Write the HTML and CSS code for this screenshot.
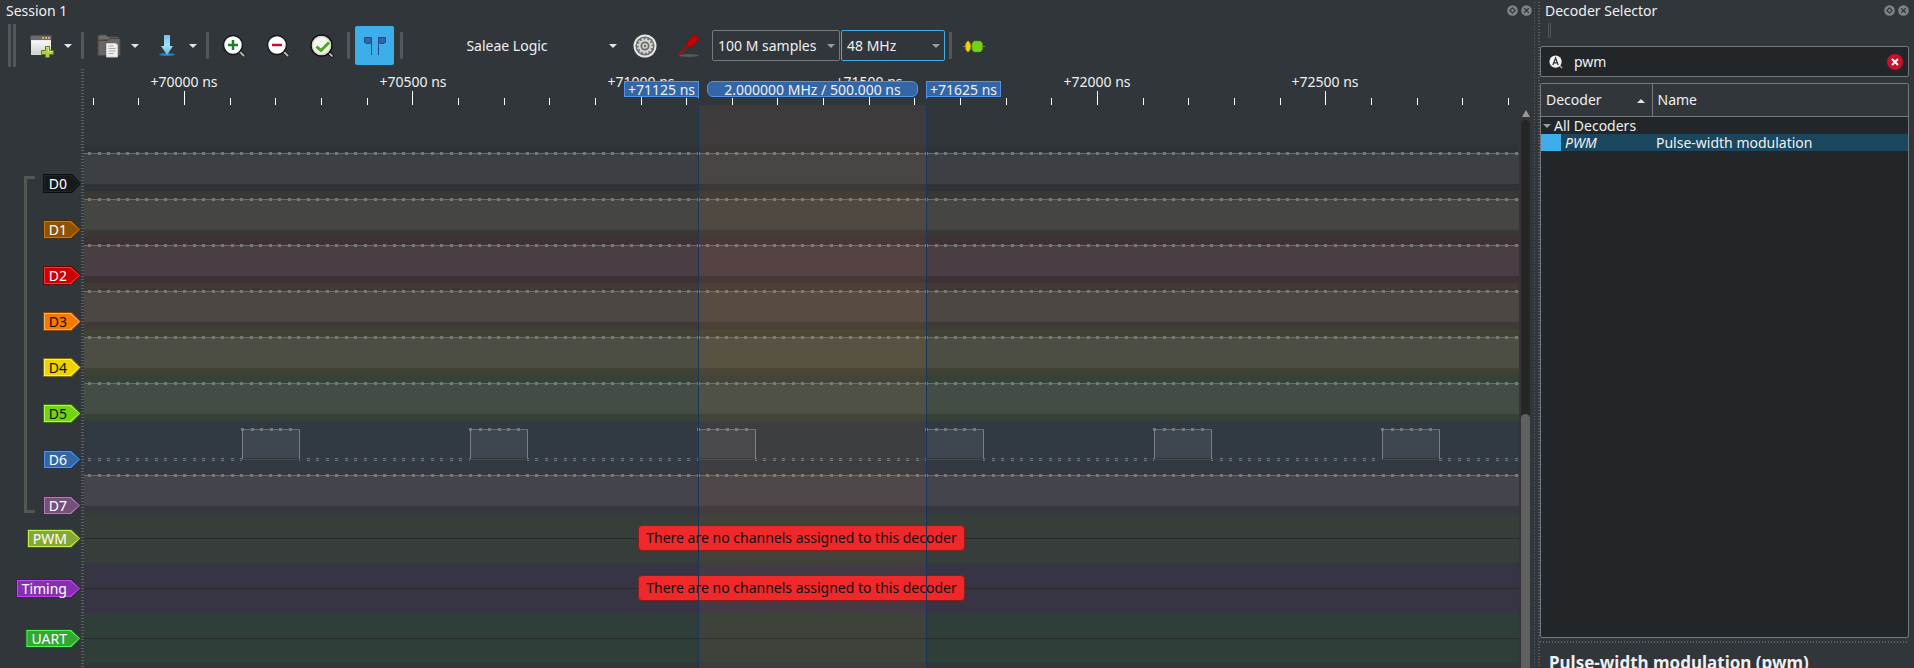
FILE: index.html
```html
<!DOCTYPE html>
<html lang="en">
<head>
<meta charset="utf-8">
<title>Session 1</title>
<link rel="stylesheet" href="styles.css">
</head>
<body>
<svg class="defs" aria-hidden="true">
  <symbol id="float" viewBox="0 0 11 11"><circle cx="5.500" cy="5.500" r="5.300" fill="#818486"/><path d="M5.500 2.800 8.200 5.500 5.500 8.200 2.800 5.500z" fill="none" stroke="#31363b" stroke-width="1.200"/></symbol>
  <symbol id="close" viewBox="0 0 11 11"><circle cx="5.500" cy="5.500" r="5.300" fill="#818486"/><path d="M3.200 3.200 7.800 7.800M7.800 3.200 3.200 7.800" stroke="#31363b" stroke-width="1.300"/></symbol>
  <symbol id="high" overflow="visible">
    <rect y="8" width="100%" height="30" fill="#fff" fill-opacity=".065"/>
    <path d="M0 38.500H6000" stroke="#fff" stroke-opacity=".06"/>
    <path d="M0 8.500H6000" stroke="#10ad10"/>
    <path d="M4.200 8.500H6000" stroke="#767a76" stroke-width="3" stroke-dasharray="3 6.510"/>
    <path d="M0 8.500H6000" stroke="#10ad10" stroke-opacity=".25"/>
  </symbol>
  <symbol id="pulse" overflow="visible">
    <rect y="8" width="57" height="30" fill="#fff" fill-opacity=".065"/>
    <path d="M0 38.500H57" stroke="#32373c" stroke-width="3"/>
    <path d="M0 38.500H57" stroke="#444c52"/>
    <path d="M.500 8V38M57.500 8V38" stroke="#7b7f82"/>
    <path d="M0 8.500H58" stroke="#10ad10"/>
    <path d="M-1 8.500H50" stroke="#767a76" stroke-width="3" stroke-dasharray="3 6.510"/>
  </symbol>
</svg>

<main class="window">
  <section class="session">
    <header class="dock-title">
      <h1>Session 1</h1>
      <button aria-label="Float"><svg><use href="#float"/></svg></button>
      <button aria-label="Close"><svg><use href="#close"/></svg></button>
    </header>

    <div class="toolbar">
      <span class="handle"></span>
      <div class="split">
        <button class="tool" aria-label="New view"><svg class="icon" viewBox="0 0 24 24">
          <path d="M1 2h20v19H1z" fill="#d9d9d9"/><path d="M.500 1.500h21V6H.500z" fill="#6b6b6b"/><path d="M1 6.500h20V20H1z" fill="url(#win)"/>
          <path d="M12 3h2v2h-2zM15 3h2v2h-2zM18 3h2v2h-2z" fill="#e9a53a"/>
          <path d="M15.500 12.500h4v4h4v4h-4v3h-4v-3h-4v-4h4z" fill="#b4cf4b" stroke="#5f7a14"/>
          <path d="M16.500 13.500h2v4h4" fill="none" stroke="#dbe88f"/>
          <defs><linearGradient id="win" x2="0" y2="1"><stop stop-color="#fafafa"/><stop offset="1" stop-color="#cfcfcf"/></linearGradient></defs>
        </svg></button>
        <button class="arrow" aria-label="New view options"></button>
      </div>
      <span class="sep"></span>
      <div class="split">
        <button class="tool" aria-label="Open"><svg class="icon" viewBox="0 0 24 24">
          <path d="M1 2.500 2 1h7l2 2h10.500v3H1z" fill="#6f6c6a" stroke="#4b4846"/><path d="M1 6.500 11 6.500 13 4.500h10V21.500H1z" fill="#686563" stroke="#4a4745"/>
          <path d="M9.500 9.500H19l1.500 1.500v12H9.500z" fill="#efefef" stroke="#c9c9c9"/><path d="M11.500 12h5M11.500 14.500h7M11.500 17h7M11.500 19.500h5" stroke="#a9a9a9"/>
        </svg></button>
        <button class="arrow" aria-label="Open options"></button>
      </div>
      <div class="split">
        <button class="tool" aria-label="Save"><svg class="icon" viewBox="0 0 24 24">
          <ellipse cx="12" cy="20.500" rx="8" ry="1.500" fill="#2583bd"/>
          <path d="M9 1h6v11h3l-6 9-6-9h3z" fill="url(#dl)"/>
          <defs><linearGradient id="dl" x2="0" y2="1"><stop stop-color="#6cc4ee"/><stop offset=".5" stop-color="#a5dff6"/><stop offset="1" stop-color="#5bbdec"/></linearGradient></defs>
        </svg></button>
        <button class="arrow" aria-label="Save options"></button>
      </div>
      <span class="sep"></span>
      <button class="tool" aria-label="Zoom in"><svg class="icon" viewBox="0 0 24 24">
        <path d="M17 17l5 5" stroke="#222" stroke-width="4"/><path d="M17 17l5 5" stroke="#b6b5a8" stroke-width="2"/><circle cx="11" cy="11" r="9.500" fill="#fff" stroke="#1a1a1a" stroke-width="1.500"/><path d="M11 6v10M6 11h10" stroke="#12852a" stroke-width="2.500"/>
      </svg></button>
      <button class="tool" aria-label="Zoom out"><svg class="icon" viewBox="0 0 24 24">
        <path d="M17 17l5 5" stroke="#222" stroke-width="4"/><path d="M17 17l5 5" stroke="#b6b5a8" stroke-width="2"/><circle cx="11" cy="11" r="9.500" fill="#fff" stroke="#1a1a1a" stroke-width="1.500"/><path d="M6 11h10" stroke="#c2102c" stroke-width="2.500"/>
      </svg></button>
      <button class="tool" aria-label="Zoom to fit"><svg class="icon" viewBox="0 0 24 24">
        <path d="M18 18l5 5" stroke="#111" stroke-width="4"/><path d="M18 18l4.500 4.500" stroke="#b6b5a8" stroke-width="2"/><circle cx="11.500" cy="11.500" r="10.500" fill="#f4f4f0" stroke="#111" stroke-width="1.500"/><circle cx="11.500" cy="11.500" r="9" fill="none" stroke="#c9c8be" stroke-width="1"/><path d="M6.500 12.500l4.500 4 8-8" fill="none" stroke="#49a81c" stroke-width="3"/>
      </svg></button>
      <span class="sep"></span>
      <button class="tool on" aria-label="Show cursors" aria-pressed="true"><svg class="icon" viewBox="0 0 24 24">
        <path d="M8.500 21V3.500H1.500V8l1.500 1.500h4L8.500 7M15.500 21V3.500h7V8L21 9.500h-4L15.500 7" fill="#3465a4" stroke="#204a87"/>
      </svg></button>
      <span class="sep"></span>
      <button class="device"><span>Saleae Logic</span><i class="arrow"></i></button>
      <button class="tool" aria-label="Configure device"><svg class="icon" viewBox="0 0 24 24">
        <circle cx="12" cy="12" r="11.500" fill="#e6e6e4"/><circle cx="12" cy="12" r="9.500" fill="#6a6c6c"/>
        <circle cx="12" cy="12" r="7" fill="none" stroke="#d5d5d3" stroke-width="2" stroke-dasharray="2.200 1.465"/><circle cx="12" cy="12" r="5.500" fill="none" stroke="#d5d5d3" stroke-width="2"/>
        <circle cx="12" cy="12" r="2" fill="none" stroke="#d5d5d3" stroke-width="1.500"/>
      </svg></button>
      <button class="tool" aria-label="Configure channels"><svg class="icon" viewBox="0 0 24 24">
        <ellipse cx="12" cy="21.500" rx="10" ry="1.500" fill="#55595c"/><path d="M2 21 12 10.500" stroke="#c00" stroke-width="1.500"/><path d="M9.500 11 11 7l4.500-4L17 0l2 2.500 3.500 1L21 6l-5.500 6-4 1.500z" fill="#c80000" stroke="#8e0000" stroke-width=".500"/>
      </svg></button>
      <div class="combos">
        <label class="combo samples"><select aria-label="Sample count"><option>100 M samples</option></select></label>
        <label class="combo rate"><select aria-label="Sample rate"><option>48 MHz</option></select></label>
      </div>
      <span class="sep tight"></span>
      <button class="tool tight" aria-label="Add protocol decoder"><svg class="icon" viewBox="0 0 24 24">
        <path d="M1 12.500h22" stroke="#888"/><path d="M5.500 7h1L8.500 10v5l-2 3h-1l-2-3v-5z" fill="#edd400" stroke="#a08c00" stroke-width=".500"/><path d="M12 7h6.500l2 2.500v6l-2 2.500H12l-2-2.500v-6z" fill="#73d216" stroke="#4e9a06" stroke-width=".500"/>
      </svg></button>
    </div>

    <div class="view">
      <div class="labels">
        <div class="group">
          <span class="bracket"></span>
          <ul>
            <li><span class="tag d0">D0</span></li>
            <li><span class="tag d1">D1</span></li>
            <li><span class="tag d2">D2</span></li>
            <li><span class="tag d3">D3</span></li>
            <li><span class="tag d4">D4</span></li>
            <li><span class="tag d5">D5</span></li>
            <li><span class="tag d6">D6</span></li>
            <li><span class="tag d7">D7</span></li>
          </ul>
        </div>
        <ul class="decoders">
          <li><span class="tag pwm">PWM</span></li>
          <li><span class="tag timing">Timing</span></li>
          <li><span class="tag uart">UART</span></li>
        </ul>
      </div>
      <div class="gutter"></div>
      <div class="plot">
        <svg class="ruler">
          <path d="M8.700 33H6000" stroke="#fff" stroke-width="8" stroke-dasharray="1 44.650"/>
          <path d="M100 29.500H6000" stroke="#fff" stroke-width="15" stroke-dasharray="1 227.250"/>
          <g text-anchor="middle">
            <text x="100" y="18">+70000 ns</text><text x="329" y="18">+70500 ns</text><text x="557" y="18">+71000 ns</text>
            <text x="785" y="18">+71500 ns</text><text x="1013" y="18">+72000 ns</text><text x="1241" y="18">+72500 ns</text>
          </g>
        </svg>
        <div class="traces">
          <svg class="trace d0"><use href="#high"/></svg>
          <svg class="trace d1"><use href="#high"/></svg>
          <svg class="trace d2"><use href="#high"/></svg>
          <svg class="trace d3"><use href="#high"/></svg>
          <svg class="trace d4"><use href="#high"/></svg>
          <svg class="trace d5"><use href="#high"/></svg>
          <svg class="trace d6">
            <path d="M4.200 38.500H6000" stroke="#767a7a" stroke-width="3" stroke-dasharray="3 6.510"/>
            <path d="M0 38.500H6000" stroke="#b00c0c"/>
            <use href="#pulse" x="158"/><use href="#pulse" x="386"/><use href="#pulse" x="614"/><use href="#pulse" x="842"/><use href="#pulse" x="1070"/><use href="#pulse" x="1298"/>
          </svg>
          <svg class="trace d7"><use href="#high"/></svg>
          <div class="trace pwm"><span class="error">There are no channels assigned to this decoder</span></div>
          <div class="trace timing"><span class="error">There are no channels assigned to this decoder</span></div>
          <div class="trace uart"></div>
        </div>
        <div class="cursor-area"></div>
        <div class="cursor-lines"></div>
        <div class="cursor-labels">
          <span class="flag left">+71125 ns</span>
          <span class="delta">2.000000 MHz / 500.000 ns</span>
          <span class="flag right">+71625 ns</span>
        </div>
      </div>
      <div class="scrollbar"><i class="up"></i><span class="track"><span class="thumb"></span></span></div>
    </div>
  </section>

  <div class="splitter"></div>

  <section class="selector">
    <header class="dock-title">
      <h2>Decoder Selector</h2>
      <button aria-label="Float"><svg><use href="#float"/></svg></button>
      <button aria-label="Close"><svg><use href="#close"/></svg></button>
    </header>
    <span class="handle small"></span>
    <div class="search">
      <svg class="lens" viewBox="0 0 16 16"><path d="M11.500 11.500 15 15" stroke="#bbb" stroke-width="1.500"/><circle cx="7.500" cy="7.500" r="7" fill="#f4f4f4"/><path d="M4.500 11.500 7.500 3.500l3 8M5.500 9h4" fill="none" stroke="#333" stroke-width="1.500"/></svg>
      <input type="text" value="pwm" aria-label="Search decoders">
      <button aria-label="Clear"><svg viewBox="0 0 16 16"><circle cx="8" cy="8" r="8" fill="#ca102c"/><path d="M5 5l6 6M11 5l-6 6" stroke="#fff" stroke-width="2"/></svg></button>
    </div>
    <div class="list">
      <table>
        <thead><tr><th class="sorted">Decoder</th><th>Name</th></tr></thead>
        <tbody>
          <tr><td colspan="2" class="root">All Decoders</td></tr>
          <tr class="selected"><td class="id">PWM</td><td>Pulse-width modulation</td></tr>
        </tbody>
      </table>
    </div>
    <div class="divider"></div>
    <h3>Pulse-width modulation (pwm)</h3>
  </section>
</main>
</body>
</html>
```
FILE: styles.css
```css
* { box-sizing: border-box; }
body { margin: 0; background: #31363b; color: #eff0f1; font: 14px/18px "Noto Sans", "Open Sans", sans-serif; }
h1, h2, h3, ul { margin: 0; padding: 0; font-size: inherit; font-weight: normal; list-style: none; }
button, input, select { font: inherit; color: inherit; background: none; border: 0; padding: 0; margin: 0; }
.defs { position: absolute; width: 0; height: 0; }

.window { display: flex; height: 100vh; overflow: hidden; }
.session { flex: 1; min-width: 0; display: flex; flex-direction: column; }

.dock-title { display: flex; align-items: center; gap: 3px; height: 22px; padding: 0 0 2px 6px; }
.dock-title h1, .dock-title h2 { flex: 1; padding-top: 2px; }
.dock-title button { width: 11px; height: 11px; display: flex; }
.dock-title svg { width: 11px; height: 11px; }

.toolbar { display: flex; align-items: center; gap: 5px; height: 47px; padding-left: 8px; }
.handle { width: 8px; height: 43px; margin-right: 1px; border: solid #53565a; border-width: 0 3px; }
.sep { width: 3px; height: 27px; margin-left: 1px; background: #53565a; border-radius: 1px; }
.sep.tight { margin-left: -1px; }
.split { display: flex; align-items: center; }
.tool { width: 39px; height: 39px; display: flex; align-items: center; justify-content: center; border-radius: 2px; }
.tool.on { background: #3daee9; }
.tool.tight { margin-left: -3px; }
.icon { width: 24px; height: 24px; }
.arrow { width: 14px; height: 39px; display: flex; align-items: center; justify-content: center; }
.arrow::after { content: ""; border: solid transparent; border-width: 4px 4px 0; border-top-color: #e4e5e6; }
.device { display: flex; align-items: center; width: 212px; height: 39px; }
.device span { flex: 1; }
.combos { display: flex; gap: 1px; margin-left: -1px; }
.combo { position: relative; display: flex; height: 31px; border: 1px solid #76797c; border-radius: 2px; }
.combo::after { content: ""; position: absolute; right: 4px; top: 13px; border: solid transparent; border-width: 4px 4px 0; border-top-color: #9a9c9e; pointer-events: none; }
.combo select { appearance: none; width: 100%; padding: 0 5px; }
.samples { width: 128px; }
.rate { width: 104px; border-color: #3daee9; }

.view { flex: 1; min-height: 0; display: flex; overflow: hidden; }
.labels { width: 81px; padding-top: 76px; }
.group { display: flex; justify-content: space-between; padding-left: 24px; }
.bracket { width: 11px; margin: 31px 0 0; border: 3px solid #55564f; border-right: 0; border-radius: 1px; }
.group li { height: 46px; padding-top: 29px; }
.decoders li { height: 50px; padding-top: 16px; }
.labels li { display: flex; justify-content: flex-end; }
.tag { position: relative; z-index: 0; height: 19px; padding: 0 14px 0 6px; line-height: 19px; color: #fff; background: var(--edge); }
.tag, .tag::before, .tag::after { clip-path: polygon(0 0, calc(100% - 9px) 0, 100% 50%, calc(100% - 9px) 100%, 0 100%); }
.tag::before, .tag::after { content: ""; position: absolute; z-index: -1; inset: 1px; background: var(--rim); }
.tag::after { inset: 2px; background: var(--fill); }
.d0 { --fill: #16191a; --rim: #22282a; --edge: #0c0e0f; --tint: #0000000a; }
.d1 { --fill: #8f5202; --rim: #cf7804; --edge: #4c2c02; --tint: #8f520216; }
.d2 { --fill: #cc0000; --rim: #ff3535; --edge: #6c0000; --tint: #cc000014; }
.d3 { --fill: #f57900; --rim: #ffb067; --edge: #8a4400; --tint: #f5790014; }
.d4 { --fill: #edd400; --rim: #fff15c; --edge: #7f7200; --tint: #edd40014; }
.d5 { --fill: #73d216; --rim: #a9ff4c; --edge: #3f720c; --tint: #73d21614; }
.d6 { --fill: #3465a4; --rim: #4f93ee; --edge: #1c3657; --tint: #3465a414; }
.d7 { --fill: #75507b; --rim: #b37bbc; --edge: #3e2b41; --tint: #75507b14; }
.pwm { --fill: #85a734; --rim: #c1f24c; --edge: #465a1a; --tint: #85a73413; }
.timing { --fill: #8531ad; --rim: #c047f9; --edge: #451a5a; --tint: #8531ad14; }
.uart { --fill: #32a832; --rim: #4cfb4c; --edge: #1a5a1a; --tint: #23a83c13; }
.tag.d3, .tag.d4, .tag.d5 { color: #111; }

.gutter { width: 3px; background: repeating-linear-gradient(#5d6165 0 1px, transparent 1px 3px); }
.plot { position: relative; flex: 1; min-width: 0; overflow: hidden; }
.ruler { display: block; width: 100%; height: 36px; fill: #eff0f1; shape-rendering: crispEdges; }
.traces { padding-top: 40px; }
.trace { display: flex; align-items: center; justify-content: center; width: 100%; height: 46px; background: var(--tint); shape-rendering: crispEdges; fill: none; }
div.trace { height: 50px; background: linear-gradient(#262b2c, #262b2c) 0 25px / 100% 1px no-repeat, var(--tint); }
.error { position: relative; z-index: 2; padding: 3px 7px; border: 1px solid #8f1c1c; border-radius: 4px; background: #ef2929; color: #111; }
.cursor-area, .cursor-lines { position: absolute; left: 614px; top: 36px; bottom: 0; width: 229px; }
.cursor-area { z-index: 1; background: #ff8c4610; }
.cursor-lines { z-index: 3; border: solid #1b3458; border-width: 0 1px; }
.cursor-labels { position: absolute; z-index: 4; left: 540px; top: 12px; display: flex; width: 377px; height: 16px; line-height: 15px; text-align: center; white-space: nowrap; }
.cursor-labels span { border: 1px solid #4f93ee; background: #3465a4; }
.flag { position: relative; width: 75px; }
.flag::after { content: ""; position: absolute; top: 14px; border: solid transparent; border-width: 0 3px 3px 0; }
.left::after { right: -1px; border-right-color: #4f93ee; }
.right::after { left: -1px; border-width: 3px 3px 0 0; border-top-color: #4f93ee; }
.delta { flex: 1; margin: 0 8px; border-radius: 6px; }

.scrollbar { width: 13px; display: flex; flex-direction: column; align-items: center; padding-top: 41px; }
.up { border: solid transparent; border-width: 0 4px 7px; border-bottom-color: #9a9a9a; }
.track { width: 9px; flex: 1; margin-top: 3px; padding-top: 294px; background: #262626; border-radius: 5px 5px 0 0; }
.thumb { display: block; height: 100%; background: #606060; border-radius: 5px 5px 0 0; }

.splitter { width: 8px; margin-top: 2px; background: repeating-linear-gradient(#5d6165 0 1px, transparent 1px 3px) 2px 0 / 1px 100% no-repeat, repeating-linear-gradient(#5d6165 0 1px, transparent 1px 3px) 6px 0 / 2px 100% no-repeat; }

.selector { width: 374px; padding-right: 5px; display: flex; flex-direction: column; }
.selector .dock-title { padding-left: 5px; }
.handle.small { width: 3px; height: 15px; margin: 1px 0 0 8px; border-width: 0 1px; }
.search { display: flex; align-items: center; gap: 11px; height: 31px; margin-top: 8px; padding: 0 5px 0 8px; border: 1px solid #76797c; border-radius: 2px; background: #232629; }
.search svg { display: block; width: 16px; height: 16px; }
.search .lens { width: 14px; height: 14px; }
.search input { flex: 1; min-width: 0; outline: 0; }
.list { flex: 1; margin-top: 6px; border: 1px solid #76797c; border-radius: 2px; background: #232629; }
table { width: 100%; border-collapse: collapse; table-layout: fixed; line-height: 17px; text-align: left; }
th { height: 32px; padding: 0 5px; background: #31363b; border-bottom: 1px solid #76797c; font-weight: normal; }
.sorted { position: relative; width: 111px; border-right: 1px solid #76797c; }
.sorted::after { content: ""; position: absolute; right: 7px; top: 15px; border: solid transparent; border-width: 0 4px 4px; border-bottom-color: #e4e5e6; }
td { height: 17px; padding: 0 4px; }
.root { position: relative; padding-left: 13px; }
.root::before { content: ""; position: absolute; left: 2px; top: 7px; border: solid transparent; border-width: 4px 4px 0; border-top-color: #9a9c9e; }
.selected { background: #1a475d; }
.id { padding-left: 24px; font-style: italic; background: linear-gradient(#3daee9, #3daee9) 0 0 / 20px 100% no-repeat; }
.divider { height: 2px; margin-top: 3px; background: repeating-linear-gradient(90deg, #5d6165 0 1px, transparent 1px 3px); }
h3 { height: 25px; padding: 8px 0 0 9px; font-size: 17px; font-weight: bold; line-height: 24px; overflow: hidden; }
```
